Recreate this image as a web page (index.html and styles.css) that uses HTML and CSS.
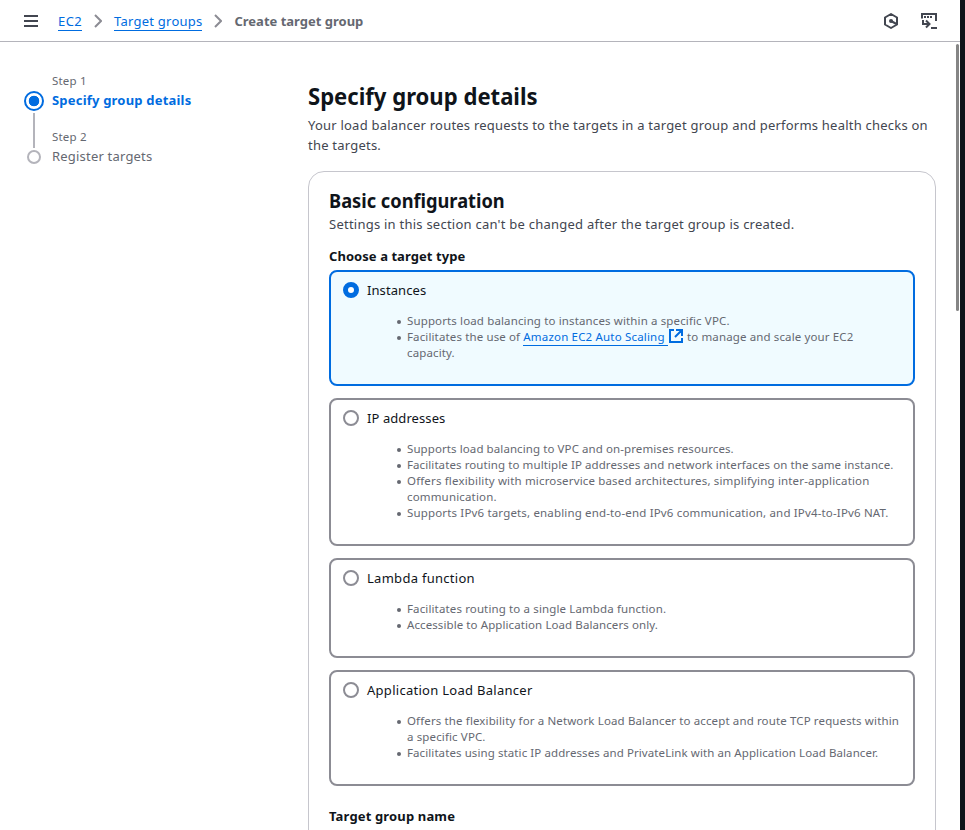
FILE: index.html
```
<!DOCTYPE html>
<html lang="en">
<head>
<meta charset="utf-8">
<title>Create target group</title>
<link rel="stylesheet" href="styles.css">
</head>
<body>
<div class="app">
  <header class="topbar">
    <svg class="menu" width="14" height="12" viewBox="0 0 14 12"><path d="M0 1h14M0 6h14M0 11h14" stroke="#424650" stroke-width="2"/></svg>
    <nav class="crumbs">
      <a class="crumb-ec2" href="#">EC2</a>
      <svg class="chev" width="8" height="14" viewBox="0 0 8 14"><path d="M1 1l6 6-6 6" fill="none" stroke="#8c8c94" stroke-width="2"/></svg>
      <a class="crumb-groups" href="#">Target groups</a>
      <svg class="chev" width="8" height="14" viewBox="0 0 8 14"><path d="M1 1l6 6-6 6" fill="none" stroke="#8c8c94" stroke-width="2"/></svg>
      <span class="current">Create target group</span>
    </nav>
    <div class="tools">
      <svg width="16" height="16" viewBox="0 0 16 16"><path d="M8 1l6 3.500v7L8 15l-6-3.500v-7z" fill="none" stroke="#424650" stroke-width="2" stroke-linejoin="round"/><circle cx="8" cy="8" r="2" fill="#424650"/><path d="M8 8l5.500 3" stroke="#424650" stroke-width="2"/></svg>
      <svg width="16" height="16" viewBox="0 0 16 16"><path d="M1 5.500V1h14v7M2 7v4h6.500M5 7.500l3.500 3.500L5 14.500M10 15h6" fill="none" stroke="#424650" stroke-width="2"/><path d="M3 4h2M6 4h2M9 4h2" stroke="#424650" stroke-width="2"/></svg>
    </div>
  </header>
  <div class="body">
    <aside class="steps">
      <div class="rail">
        <span class="dot active"></span>
        <span class="line"></span>
        <span class="dot"></span>
      </div>
      <div class="step-list">
        <div class="step"><span class="step-no">Step 1</span><strong class="step-name on">Specify group details</strong></div>
        <div class="step"><span class="step-no">Step 2</span><span class="step-name">Register targets</span></div>
      </div>
    </aside>
    <main class="content">
      <h1>Specify group details</h1>
      <p class="lead">Your load balancer routes requests to the targets in a target group and performs health checks on<br>the targets.</p>
      <section class="panel">
        <h2>Basic configuration</h2>
        <p class="desc">Settings in this section can't be changed after the target group is created.</p>
        <h3 class="label label-type">Choose a target type</h3>
        <div class="tiles">
          <div class="tile selected">
            <div class="tile-head"><span class="radio"></span><span>Instances</span></div>
            <ul>
              <li>Supports load balancing to instances within a specific VPC.</li>
              <li>Facilitates the use of <a class="ext" href="#">Amazon EC2 Auto Scaling </a><svg class="ext-icon" width="14" height="14" viewBox="0 0 14 14"><path d="M5 1H1v12h12V9M7 1h6v6M13 1L6 8" fill="none" stroke="#006ce0" stroke-width="2"/></svg> to manage and scale your EC2<br>capacity.</li>
            </ul>
          </div>
          <div class="tile">
            <div class="tile-head"><span class="radio"></span><span>IP addresses</span></div>
            <ul>
              <li class="tight">Supports load balancing to VPC and on-premises resources.</li>
              <li class="tight">Facilitates routing to multiple IP addresses and network interfaces on the same instance.</li>
              <li class="wide">Offers flexibility with microservice based architectures, simplifying inter-application<br>communication.</li>
              <li class="wide">Supports IPv6 targets, enabling end-to-end IPv6 communication, and IPv4-to-IPv6 NAT.</li>
            </ul>
          </div>
          <div class="tile">
            <div class="tile-head"><span class="radio"></span><span class="spaced">Lambda function</span></div>
            <ul>
              <li>Facilitates routing to a single Lambda function.</li>
              <li class="tight">Accessible to Application Load Balancers only.</li>
            </ul>
          </div>
          <div class="tile">
            <div class="tile-head"><span class="radio"></span><span class="spaced">Application Load Balancer</span></div>
            <ul>
              <li>Offers the flexibility for a Network Load Balancer to accept and route TCP requests within<br>a specific VPC.</li>
              <li class="tight">Facilitates using static IP addresses and PrivateLink with an Application Load Balancer.</li>
            </ul>
          </div>
        </div>
        <h3 class="label label-name">Target group name</h3>
      </section>
    </main>
  </div>
  <div class="scroll-thumb"></div>
</div>
</body>
</html>
```
FILE: styles.css
```
* { box-sizing: border-box; }
body {
  margin: 0;
  height: 830px;
  overflow: hidden;
  background: #0f141a;
  font-family: "Noto Sans", "Open Sans", sans-serif;
  font-size: 13px;
  line-height: 20px;
  color: #0f141a;
  white-space: nowrap;
}
h1, h2, h3, p, ul { margin: 0; padding: 0; }
svg { display: block; flex: none; }
a { color: #006ce0; text-decoration: none; border-bottom: 1px solid #006ce0; }
.app { position: relative; width: 960px; height: 830px; overflow: hidden; background: #fff; }
.topbar { display: flex; align-items: center; height: 42px; padding: 0 23px 0 24px; border-bottom: 1px solid #b4b4bb; }
.crumbs { display: flex; align-items: center; margin-left: 20px; }
.crumbs a { padding-top: 2px; line-height: 17px; }
.crumb-ec2 { letter-spacing: 0.4px; }
.crumb-groups { letter-spacing: 0.23px; }
.chev { margin: 0 12px; }
.current { font-weight: 700; color: #656871; }
.tools { display: flex; gap: 22px; margin-left: auto; }
.body { display: flex; }
.steps { display: flex; width: 284px; margin-left: 24px; padding-top: 29px; }
.rail { display: flex; flex-direction: column; align-items: center; width: 20px; padding-top: 20px; }
.dot { width: 14px; height: 14px; border: 2px solid #b4b4bb; border-radius: 50%; }
.dot.active { width: 20px; height: 20px; border-color: #006ce0; background: radial-gradient(circle, #006ce0 5px, #fff 5.6px); }
.line { width: 2px; height: 35px; margin: 2px 0; background: #b4b4bb; }
.step-list { margin-left: 8px; }
.step { display: flex; flex-direction: column; height: 56px; color: #656871; }
.step-no { height: 19px; font-size: 11.5px; letter-spacing: 0.2px; }
.step-name { letter-spacing: 0.2px; }
.step-name.on { color: #006ce0; }
.content { width: 628px; padding-top: 39px; }
h1, h2 { transform-origin: left; }
h1 { font-size: 24px; line-height: 30px; transform: scaleX(0.92); }
.lead { margin-top: 4px; color: #424650; letter-spacing: 0.22px; }
.panel { height: 800px; margin-top: 16px; padding: 17px 20px 0; border: 1px solid #c6c6cd; border-radius: 16px; }
h2 { font-size: 20px; line-height: 24px; transform: scaleX(0.912); }
.desc { margin-top: 1px; color: #424650; letter-spacing: 0.24px; }
.label { font-size: 13px; line-height: 20px; letter-spacing: 0.06px; }
.label-type { margin-top: 12px; }
.label-name { margin-top: 20px; letter-spacing: 0.15px; }
.tiles { display: flex; flex-direction: column; gap: 12px; margin-top: 4px; }
.tile { padding: 8px 12px 23px; border: 2px solid #8c8c94; border-radius: 8px; }
.tile.selected { border-color: #006ce0; background: #f0fbff; }
.tile-head { display: flex; align-items: center; gap: 8px; letter-spacing: 0.08px; }
.tile-head .spaced { letter-spacing: 0.28px; }
.radio { width: 16px; height: 16px; border: 2px solid #8c8c94; border-radius: 50%; background: #fff; }
.selected .radio { border: 5px solid #006ce0; }
.tile ul { margin-top: 13px; padding-left: 64px; list-style: none; font-size: 11.5px; line-height: 16px; letter-spacing: 0.13px; color: #656871; }
.tile li.tight { letter-spacing: 0.09px; }
.tile li.wide { letter-spacing: 0.16px; }
.tile li::before { content: ""; display: inline-block; width: 4px; height: 4px; margin: 0 6px 1.5px -10px; border-radius: 50%; background: #656871; }
.ext { padding-bottom: 1px; letter-spacing: 0.18px; }
.ext-icon { display: inline-block; margin: -3px 1px -2px 1px; vertical-align: 0; }
.scroll-thumb { position: absolute; left: 956px; top: 44px; width: 3px; height: 267px; border-radius: 2px; background: #858585; }
```
